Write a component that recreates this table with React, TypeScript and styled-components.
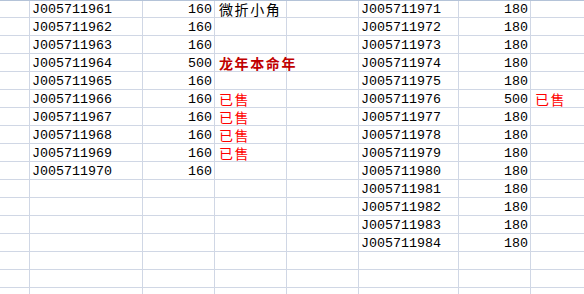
import React from 'react';
import styled, { createGlobalStyle } from 'styled-components';

const GlobalStyle = createGlobalStyle`
  html, body {
    margin: 0;
    padding: 0;
    background: #ffffff;
    overflow: hidden;
  }
`;

const GRID = '#d0d7e5';

const Sheet = styled.div`
  width: 584px;
  height: 294px;
  overflow: hidden;
  border-top: 1px solid #b4c3d8;
  box-sizing: border-box;
  background: #fff;
`;

const Row = styled.div`
  display: grid;
  grid-template-columns: 30px 113px 72px 72px 72px 100px 72px 72px;
  height: 18px;
  box-sizing: border-box;
  border-bottom: 1px solid ${GRID};

  &:first-child {
    height: 17px;
  }
`;

const Cell = styled.div<{ $right?: boolean }>`
  display: flex;
  align-items: flex-end;
  justify-content: ${({ $right }) => ($right ? 'flex-end' : 'flex-start')};
  box-sizing: border-box;
  border-right: 1px solid ${GRID};
  padding: 0 ${({ $right }) => ($right ? '2px' : '0')} 0 ${({ $right }) => ($right ? '0' : '2px')};
  white-space: nowrap;
  font-family: "Liberation Mono", "DejaVu Sans Mono", monospace;
  font-size: 13.33px;
  line-height: 14px;
  color: #000;
`;

// notes spill over into the next column, like an Excel cell does
const Note = styled.span<{ $tone?: 'plain' | 'strong' | 'sold' }>`
  font-family: "Noto Sans CJK SC", "Noto Sans", sans-serif;
  font-size: 14px;
  line-height: 15px;
  letter-spacing: 1.6px;
  margin-left: 2px;
  font-weight: ${({ $tone }) => ($tone === 'strong' ? 700 : 400)};
  color: ${({ $tone }) =>
    $tone === 'strong' ? '#c00000' : $tone === 'sold' ? '#ff0000' : '#000'};
`;

type Entry = { id: string; amt: number; note?: string; tone?: 'plain' | 'strong' | 'sold' };

const left: Entry[] = [
  { id: 'J005711961', amt: 160, note: '微折小角', tone: 'plain' },
  { id: 'J005711962', amt: 160 },
  { id: 'J005711963', amt: 160 },
  { id: 'J005711964', amt: 500, note: '龙年本命年', tone: 'strong' },
  { id: 'J005711965', amt: 160 },
  { id: 'J005711966', amt: 160, note: '已售', tone: 'sold' },
  { id: 'J005711967', amt: 160, note: '已售', tone: 'sold' },
  { id: 'J005711968', amt: 160, note: '已售', tone: 'sold' },
  { id: 'J005711969', amt: 160, note: '已售', tone: 'sold' },
  { id: 'J005711970', amt: 160 },
];

const right: Entry[] = Array.from({ length: 14 }, (_, i) => {
  const n = 71 + i;
  return n === 76
    ? { id: `J0057119${n}`, amt: 500, note: '已售', tone: 'sold' as const }
    : { id: `J0057119${n}`, amt: 180 };
});

const ROWS = 17;

const App: React.FC = () => {
  return (
    <>
      <GlobalStyle />
      <Sheet>
        {Array.from({ length: ROWS }, (_, r) => {
          const a = left[r];
          const b = right[r];
          return (
            <Row key={r}>
              <Cell />
              <Cell>{a?.id}</Cell>
              <Cell $right>{a?.amt}</Cell>
              <Cell>{a?.note && <Note $tone={a.tone}>{a.note}</Note>}</Cell>
              <Cell />
              <Cell>{b?.id}</Cell>
              <Cell $right>{b?.amt}</Cell>
              <Cell>{b?.note && <Note $tone={b.tone}>{b.note}</Note>}</Cell>
            </Row>
          );
        })}
      </Sheet>
    </>
  );
};

export default App;
